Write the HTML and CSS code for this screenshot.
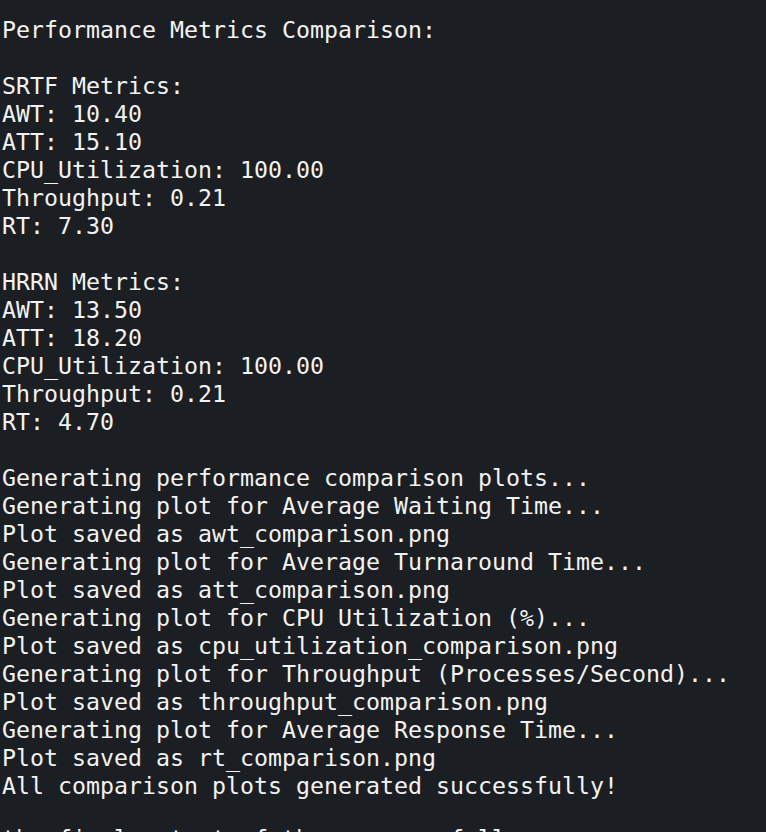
FILE: index.html
```html
<!DOCTYPE html>
<html>
<head>
<meta charset="utf-8">
<link rel="stylesheet" href="styles.css">
</head>
<body>
<pre class="term">Performance Metrics Comparison:

SRTF Metrics:
AWT: 10.40
ATT: 15.10
CPU_Utilization: 100.00
Throughput: 0.21
RT: 7.30

HRRN Metrics:
AWT: 13.50
ATT: 18.20
CPU_Utilization: 100.00
Throughput: 0.21
RT: 4.70

Generating performance comparison plots...
Generating plot for Average Waiting Time...
Plot saved as awt_comparison.png
Generating plot for Average Turnaround Time...
Plot saved as att_comparison.png
Generating plot for CPU Utilization (%)...
Plot saved as cpu_utilization_comparison.png
Generating plot for Throughput (Processes/Second)...
Plot saved as throughput_comparison.png
Generating plot for Average Response Time...
Plot saved as rt_comparison.png
All comparison plots generated successfully!</pre>
<pre class="term term-next">the final output of the program follows.</pre>
</body>
</html>
```
FILE: styles.css
```css
html, body {
  margin: 0;
  padding: 0;
  background: #1b1f23;
  overflow: hidden;
}
.term {
  margin: 0;
  padding: 16px 0 0 2px;
  font-family: "DejaVu Sans Mono", monospace;
  font-size: 23.25px;
  line-height: 28px;
  color: #f2f2f2;
  white-space: pre;
}
.term-next {
  padding-top: 0;
  margin-top: 25px;
}
```
